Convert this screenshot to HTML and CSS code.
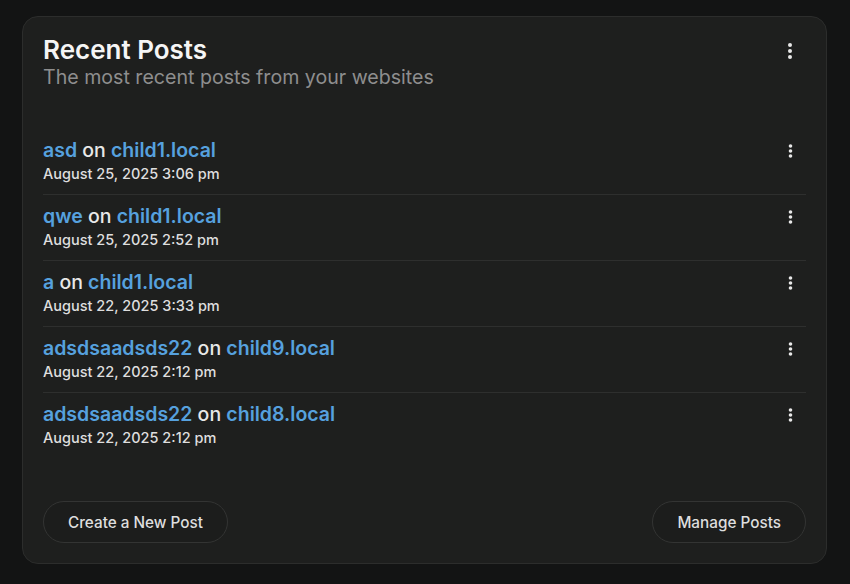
FILE: index.html
```html
<!DOCTYPE html>
<html lang="en">
<head>
  <meta charset="UTF-8">
  <meta name="viewport" content="width=device-width, initial-scale=1.0">
  <title>Recent Posts</title>
  <link rel="stylesheet" href="styles.css">
</head>
<body>
  <div class="card">
    <div class="card-header">
      <div class="heading">
        <h2 class="title">Recent Posts</h2>
        <p class="subtitle">The most recent posts from your websites</p>
      </div>
      <button class="menu-btn" aria-label="More">
        <svg width="6" height="16" viewBox="0 0 6 16"><circle cx="3" cy="2" r="2"/><circle cx="3" cy="8" r="2"/><circle cx="3" cy="14" r="2"/></svg>
      </button>
    </div>

    <ul class="post-list">
      <li class="post">
        <div class="post-info">
          <div class="post-title"><a href="#">asd</a> on <a href="#">child1.local</a></div>
          <div class="post-date">August 25, 2025 3:06 pm</div>
        </div>
        <button class="menu-btn" aria-label="More">
          <svg width="5" height="14" viewBox="0 0 5 14"><circle cx="2.5" cy="2" r="1.8"/><circle cx="2.5" cy="7" r="1.8"/><circle cx="2.5" cy="12" r="1.8"/></svg>
        </button>
      </li>
      <li class="post">
        <div class="post-info">
          <div class="post-title"><a href="#">qwe</a> on <a href="#">child1.local</a></div>
          <div class="post-date">August 25, 2025 2:52 pm</div>
        </div>
        <button class="menu-btn" aria-label="More">
          <svg width="5" height="14" viewBox="0 0 5 14"><circle cx="2.5" cy="2" r="1.8"/><circle cx="2.5" cy="7" r="1.8"/><circle cx="2.5" cy="12" r="1.8"/></svg>
        </button>
      </li>
      <li class="post">
        <div class="post-info">
          <div class="post-title"><a href="#">a</a> on <a href="#">child1.local</a></div>
          <div class="post-date">August 22, 2025 3:33 pm</div>
        </div>
        <button class="menu-btn" aria-label="More">
          <svg width="5" height="14" viewBox="0 0 5 14"><circle cx="2.5" cy="2" r="1.8"/><circle cx="2.5" cy="7" r="1.8"/><circle cx="2.5" cy="12" r="1.8"/></svg>
        </button>
      </li>
      <li class="post">
        <div class="post-info">
          <div class="post-title"><a href="#">adsdsaadsds22</a> on <a href="#">child9.local</a></div>
          <div class="post-date">August 22, 2025 2:12 pm</div>
        </div>
        <button class="menu-btn" aria-label="More">
          <svg width="5" height="14" viewBox="0 0 5 14"><circle cx="2.5" cy="2" r="1.8"/><circle cx="2.5" cy="7" r="1.8"/><circle cx="2.5" cy="12" r="1.8"/></svg>
        </button>
      </li>
      <li class="post">
        <div class="post-info">
          <div class="post-title"><a href="#">adsdsaadsds22</a> on <a href="#">child8.local</a></div>
          <div class="post-date">August 22, 2025 2:12 pm</div>
        </div>
        <button class="menu-btn" aria-label="More">
          <svg width="5" height="14" viewBox="0 0 5 14"><circle cx="2.5" cy="2" r="1.8"/><circle cx="2.5" cy="7" r="1.8"/><circle cx="2.5" cy="12" r="1.8"/></svg>
        </button>
      </li>
    </ul>

    <div class="card-footer">
      <button class="pill-btn">Create a New Post</button>
      <button class="pill-btn">Manage Posts</button>
    </div>
  </div>
</body>
</html>
```

FILE: styles.css
```css
body {
  margin: 0;
  background-color: #131414;
  font-family: Inter, "Noto Sans", sans-serif;
  color: #f0f0f0;
}
.card {
  margin: 16px 0 0 22px;
  width: 803px;
  height: 546px;
  border: 1px solid #2c2d2c;
  border-radius: 16px;
  background-color: #1e1f1e;
  display: flex;
  flex-direction: column;
}
.card-header {
  display: flex;
  justify-content: space-between;
  align-items: flex-start;
  padding: 18px 20px 0 20px;
}
.title {
  margin: 0;
  font-size: 26px;
  line-height: 30px;
  font-weight: 600;
  color: #f5f5f5;
}
.subtitle {
  margin: 0;
  font-size: 19.6px;
  line-height: 24px;
  color: #8e8e8e;
}
.menu-btn {
  background: none;
  border: none;
  padding: 0;
  width: 32px;
  height: 32px;
  display: flex;
  align-items: center;
  justify-content: center;
  fill: #e8e8e8;
  cursor: pointer;
}
.post-list {
  list-style: none;
  margin: 0;
  padding: 40px 20px 0 20px;
}
.post {
  display: flex;
  justify-content: space-between;
  align-items: flex-start;
  padding: 9px 0 8px 0;
  border-bottom: 1px solid #2e2f2e;
}
.post:last-child {
  border-bottom: none;
}
.post .menu-btn {
  height: 24px;
  margin-top: 1px;
}
.post-title {
  font-size: 19.5px;
  line-height: 24px;
  font-weight: 500;
  color: #e8e8e8;
}
.post-title a {
  color: #56a1de;
  font-weight: 600;
  text-decoration: none;
}
.post-date {
  font-size: 14.5px;
  line-height: 24px;
  font-weight: 500;
  color: #dedede;
}
.card-footer {
  margin-top: auto;
  display: flex;
  justify-content: space-between;
  padding: 0 20px 20px 20px;
}
.pill-btn {
  height: 42px;
  padding: 0 24px;
  border: 1px solid #333433;
  border-radius: 21px;
  background-color: #1c1d1c;
  color: #dedede;
  font-family: Inter, "Noto Sans", sans-serif;
  font-size: 15.3px;
  font-weight: 500;
  cursor: pointer;
}
```
